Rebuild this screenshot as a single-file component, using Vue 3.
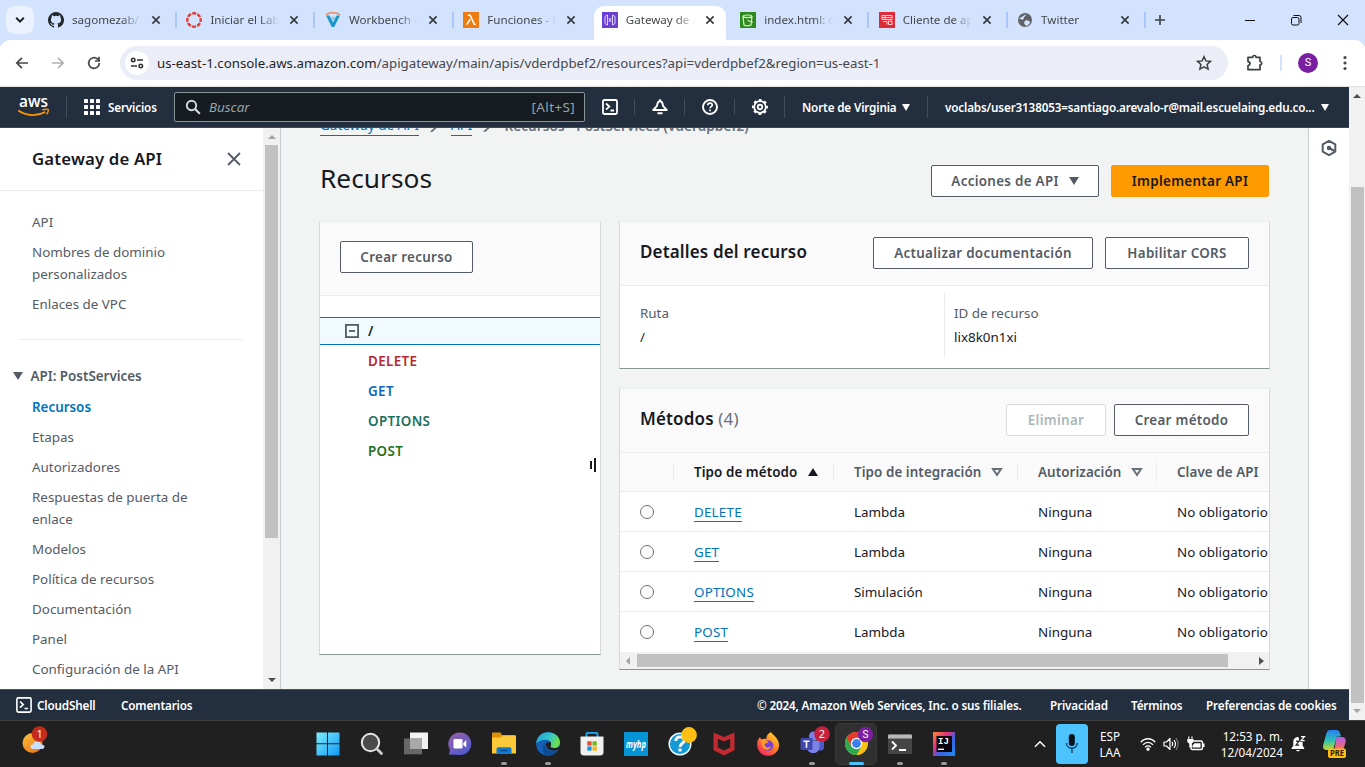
<script setup>
const tabs = [
  { title: 'sagomezab/Taller', icon: 'github', sep: true },
  { title: 'Iniciar el Laboratorio', icon: 'canvas', sep: true },
  { title: 'Workbench - Vocareum', icon: 'voc', sep: true },
  { title: 'Funciones - Lambda', icon: 'lambda' },
  { title: 'Gateway de API', icon: 'gateway', active: true },
  { title: 'index.html: ob', icon: 's3', sep: true },
  { title: 'Cliente de api', icon: 'client', sep: true },
  { title: 'Twitter', icon: 'globe', sep: true },
]
const navTop = ['API', 'Nombres de dominio personalizados', 'Enlaces de VPC']
const navApi = [
  'Recursos', 'Etapas', 'Autorizadores', 'Respuestas de puerta de enlace', 'Modelos',
  'Política de recursos', 'Documentación', 'Panel', 'Configuración de la API',
]
const tree = ['DELETE', 'GET', 'OPTIONS', 'POST']
const methods = [
  { name: 'DELETE', type: 'Lambda' },
  { name: 'GET', type: 'Lambda' },
  { name: 'OPTIONS', type: 'Simulación' },
  { name: 'POST', type: 'Lambda' },
]
</script>

<template>
  <div class="screen">
    <div class="tabstrip">
      <div class="tab-search">
        <svg width="10" height="8" viewBox="0 0 10 8"><path d="M1.2 1.8 5 5.6 8.8 1.8" fill="none" stroke="#1f1f1f" stroke-width="2" /></svg>
      </div>
      <div v-for="t in tabs" :key="t.title" class="tab" :class="{ active: t.active, sep: t.sep }">
        <svg class="fav" width="16" height="16" viewBox="0 0 16 16">
          <path v-if="t.icon === 'github'" fill="#24292f" d="M8 0a8 8 0 0 0-2.53 15.59c.4.07.55-.17.55-.38v-1.49c-2.23.48-2.7-.94-2.7-.94-.36-.92-.89-1.17-.89-1.17-.73-.5.05-.49.05-.49.81.06 1.23.83 1.23.83.72 1.22 1.88.87 2.34.66.07-.52.28-.87.51-1.07-1.78-.2-3.64-.89-3.64-3.95 0-.87.31-1.59.82-2.15-.08-.2-.36-1.02.08-2.12 0 0 .67-.21 2.2.82a7.6 7.6 0 0 1 4 0c1.53-1.04 2.2-.82 2.2-.82.44 1.1.16 1.92.08 2.12.51.56.82 1.27.82 2.15 0 3.07-1.87 3.75-3.65 3.95.29.25.54.73.54 1.48v2.19c0 .21.15.46.55.38A8 8 0 0 0 8 0Z" />
          <g v-else-if="t.icon === 'canvas'" fill="none" stroke="#e23b2e">
            <circle cx="8" cy="8" r="6.7" stroke-width="2.4" stroke-dasharray="4 1.262" stroke-dashoffset="2" />
          </g>
          <g v-else-if="t.icon === 'voc'">
            <path d="M1 3.6h3.4L8 10.4l3.6-6.8H15L9.2 15H6.8Z" fill="#1b98c9" />
            <path d="M5.5 4.8h5L8 9.4Z" fill="#8fd0e8" />
            <path d="M.8 2.6C5 .4 11 .4 15.2 2.6" fill="none" stroke="#e8916b" stroke-width="1.5" />
          </g>
          <g v-else-if="t.icon === 'lambda'">
            <rect width="16" height="16" fill="#ee7c10" />
            <path d="M4.8 3.3h2.4l4 9h1.5M7.2 7.2l-3.4 5.4" fill="none" stroke="#fff" stroke-width="1.6" />
          </g>
          <g v-else-if="t.icon === 'gateway'">
            <rect width="16" height="16" fill="#6b3fd1" />
            <path d="M3 4.5 5.5 3v10L3 11.5ZM13 4.5 10.5 3v10l2.5-1.5ZM6.8 6l2.4 4M9.200 6l-2.400 4" fill="none" stroke="#ddd0fb" stroke-width="1" />
          </g>
          <g v-else-if="t.icon === 's3'">
            <rect width="16" height="16" fill="#2f8a1c" />
            <path d="M3 4.5c0-2 9-2 9 0L11 13c-1 1-6 1-7 0ZM3 4.5c1.5 1.5 7.5 1.5 9 0M7.5 8.5l5.500 1.800" fill="none" stroke="#d9f0cf" stroke-width="1.2" />
          </g>
          <g v-else-if="t.icon === 'client'">
            <rect width="16" height="16" fill="#dd2b38" />
            <path d="M3 3.500h10v4H3zM3 5.500h10M6 3.500v4M4 9.500h4v3M9.500 9h3.500v3.500H9.500z" fill="none" stroke="#fbd0d3" stroke-width="1" />
          </g>
          <g v-else>
            <circle cx="8" cy="8" r="7" fill="#5f6368" />
            <path d="M2 6.500c2 .5 3 1.500 4 1 1.500-.8 0-2 1.800-3C9 4 8.500 2.500 9.500 2M8.500 8.500c2-.8 3.500.4 4.800 1.500-1 2.500-3 3.800-4.300 4-.3-1.500-2-1.500-1.800-3 .1-1 .5-2.100 1.300-2.500Z" fill="#d3e3fd" />
          </g>
        </svg>
        <span class="tab-title">{{ t.title }}</span>
        <svg class="tab-x" width="10" height="10" viewBox="0 0 10 10"><path d="m1.400 1.400 7.200 7.200M8.600 1.400 1.400 8.600" stroke="#33373c" stroke-width="1.600" /></svg>
      </div>
      <svg class="plus" width="12" height="12" viewBox="0 0 12 12"><path d="M6 1v10M1 6h10" stroke="#3c4043" stroke-width="1.600" /></svg>
      <div class="win">
        <svg width="12" height="12" viewBox="0 0 12 12"><path d="M1 6.500h10" stroke="#111" /></svg>
        <svg width="12" height="12" viewBox="0 0 12 12" fill="none" stroke="#111"><rect x="1.500" y="3.500" width="7.500" height="7.500" rx="1.500" /><path d="M3.500 1.500H9a2 2 0 0 1 2 2V9" /></svg>
        <svg width="12" height="12" viewBox="0 0 12 12"><path d="m1 1 10 10M11 1 1 11" stroke="#111" stroke-width="1.200" /></svg>
      </div>
    </div>

    <div class="toolbar">
      <svg class="nav-ic" width="16" height="16" viewBox="0 0 16 16"><path d="M14 8H3M8 2.800 2.800 8 8 13.200" fill="none" stroke="#474747" stroke-width="1.700" /></svg>
      <svg class="nav-ic" width="16" height="16" viewBox="0 0 16 16"><path d="M2 8h11M8 2.800 13.200 8 8 13.200" fill="none" stroke="#b0b1b3" stroke-width="1.700" /></svg>
      <svg class="nav-ic" width="16" height="16" viewBox="0 0 16 16"><path d="M13.300 8A5.300 5.300 0 1 1 11.700 4.200L13.500 6" fill="none" stroke="#474747" stroke-width="1.700" /><path d="M13.900 1.800v5h-5V5.300h3.300V1.800Z" fill="#474747" /></svg>
      <div class="omnibox">
        <div class="site">
          <svg width="14" height="12" viewBox="0 0 14 12" fill="none" stroke="#333" stroke-width="1.600"><circle cx="3.200" cy="3" r="1.700" /><path d="M7 3h6M1 9h6" /><circle cx="10.800" cy="9" r="1.700" /></svg>
        </div>
        <span class="url"><b>us-east-1.console.aws.amazon.com</b>/apigateway/main/apis/vderdpbef2/resources?api=vderdpbef2&amp;region=us-east-1</span>
        <svg width="16" height="16" viewBox="0 0 16 16"><path d="m8 1.700 1.900 4.200 4.600.5-3.400 3.100 1 4.600L8 11.800l-4.100 2.300 1-4.600L1.500 6.400l4.600-.5Z" fill="none" stroke="#3c4043" stroke-width="1.500" /></svg>
      </div>
      <svg class="puzzle" width="18" height="18" viewBox="0 0 18 18"><path d="M2 3.300h4.700c0-2.400 3.300-2.400 3.300 0h4v4.200c2.300.2 2.300 3.200 0 3.400v4.800H2v-4.200c2.600-.2 2.600-3.600 0-3.800Z" fill="none" stroke="#3c4043" stroke-width="1.700" stroke-linejoin="round" /></svg>
      <i class="tsep"></i>
      <span class="avatar">S</span>
      <svg width="4" height="16" viewBox="0 0 4 16" fill="#474747"><circle cx="2" cy="2.500" r="1.600" /><circle cx="2" cy="8" r="1.600" /><circle cx="2" cy="13.500" r="1.600" /></svg>
    </div>

    <div class="page">
      <div class="site-col">
        <header class="aws-head">
          <svg class="logo" width="32" height="22" viewBox="0 0 32 22">
            <text x="16.500" y="11" text-anchor="middle" textLength="29" lengthAdjust="spacingAndGlyphs" class="aws-word">aws</text>
            <path d="M1.300 14.500c8.500 5.800 19 5.800 27 1.500" fill="none" stroke="#f90" stroke-width="1.800" />
            <path d="M25.500 14c2-.9 5-1.100 5.600-.5.500.7-.1 3.300-1.700 4.800" fill="none" stroke="#f90" stroke-width="1.400" />
          </svg>
          <i class="hsep s1"></i>
          <svg class="grid" width="16" height="16" viewBox="0 0 16 16" fill="#fff"><g v-for="r in 3" :key="r"><rect v-for="c in 3" :key="c" :x="(c - 1) * 6" :y="(r - 1) * 6" width="4" height="4" rx=".6" /></g></svg>
          <b class="serv">Servicios</b>
          <div class="search">
            <svg width="16" height="16" viewBox="0 0 16 16"><circle cx="6.500" cy="6.500" r="4.700" fill="none" stroke="#d5dbdb" stroke-width="1.900" /><path d="m10 10 4.800 4.800" stroke="#d5dbdb" stroke-width="2.200" /></svg>
            <em>Buscar</em><span>[Alt+S]</span>
          </div>
          <div class="hicons">
            <svg width="16" height="16" viewBox="0 0 16 16" fill="none" stroke="#fff" stroke-width="1.800"><rect x="1" y="1" width="14" height="14" rx="1.500" /><path d="M4 4.500 7.300 7.600 4 10.700M8.500 11.500H12" /></svg>
            <svg width="16" height="16" viewBox="0 0 16 16" fill="none" stroke="#fff" stroke-width="1.900" stroke-linejoin="round"><path d="M8 .3v2M8 2.300C6 2.300 5.300 4.500 5 6.800L1.300 11h13.400L11 6.800C10.700 4.500 10 2.300 8 2.300ZM5.500 14.200h5" /></svg>
            <svg width="16" height="16" viewBox="0 0 16 16" fill="none" stroke="#fff" stroke-width="1.900"><circle cx="8" cy="8" r="7" /><path d="M5.700 6.300C5.900 3.200 10.400 3.500 10.300 6c-.1 1.600-2.300 1.600-2.300 3.300M8 10.500v1.800" stroke-width="1.700" /></svg>
            <svg width="16" height="16" viewBox="0 0 16 16" fill="none" stroke="#fff"><circle cx="8" cy="8" r="5.800" stroke-width="1.800" /><circle cx="8" cy="8" r="7.100" stroke-width="1.800" stroke-dasharray="2.800 2.777" stroke-dashoffset="1.400" /><circle cx="8" cy="8" r="2.200" stroke-width="1.900" /></svg>
          </div>
          <b class="region">Norte de Virginia</b><i class="tri wt"></i>
          <i class="hsep s2"></i>
          <b class="user">voclabs/user3138053=santiago.arevalo-r@mail.escuelaing.edu.co...</b><i class="tri wt"></i>
        </header>

        <div class="body">
          <aside class="side">
            <div class="side-main">
              <div class="side-title">
                <b>Gateway de API</b>
                <svg width="14" height="14" viewBox="0 0 14 14"><path d="m1 1 12 12M13 1 1 13" stroke="#545b64" stroke-width="1.800" /></svg>
              </div>
              <ul class="nav first"><li v-for="n in navTop" :key="n">{{ n }}</li></ul>
              <div class="rule"></div>
              <div class="group"><i class="tri"></i>API: PostServices</div>
              <ul class="nav"><li v-for="(n, i) in navApi" :key="n" :class="{ on: i === 0 }">{{ n }}</li></ul>
            </div>
            <div class="vbar side-bar">
              <i class="up dim"></i><div class="thumb"></div><i class="down"></i>
            </div>
          </aside>

          <main class="main">
            <div class="crumbs">
              <a>Gateway de API</a>
              <svg width="10" height="12" viewBox="0 0 10 12"><path d="m2 0 5.500 6L1 12" fill="none" stroke="#687078" stroke-width="1.800" /></svg>
              <a>API</a>
              <svg width="10" height="12" viewBox="0 0 10 12"><path d="m2 0 5.500 6L1 12" fill="none" stroke="#687078" stroke-width="1.800" /></svg>
              <b>Recursos - PostServices (vderdpbef2)</b>
            </div>
            <div class="head">
              <h1>Recursos</h1>
              <button class="btn actions">Acciones de API<i class="tri"></i></button>
              <button class="btn primary">Implementar API</button>
            </div>
            <div class="cols">
              <section class="card tree">
                <div class="tree-head"><button class="btn create">Crear recurso</button></div>
                <div class="root">
                  <svg width="14" height="14" viewBox="0 0 14 14" fill="none" stroke="#545b64" stroke-width="1.800"><rect x=".9" y=".9" width="12.200" height="12.200" /><path d="M4 7h6" /></svg>
                  <b>/</b>
                </div>
                <div v-for="m in tree" :key="m" class="leaf" :class="m.toLowerCase()">{{ m }}</div>
                <div class="grip"><i></i><i></i></div>
              </section>
              <div class="right">
                <section class="card details">
                  <div class="card-head">
                    <h2>Detalles del recurso</h2>
                    <button class="btn update">Actualizar documentación</button>
                    <button class="btn cors">Habilitar CORS</button>
                  </div>
                  <dl>
                    <div class="pair"><dt>Ruta</dt><dd>/</dd></div>
                    <div class="pair"><dt>ID de recurso</dt><dd>lix8k0n1xi</dd></div>
                  </dl>
                </section>
                <section class="card methods">
                  <div class="card-head">
                    <h2>Métodos <span>(4)</span></h2>
                    <button class="btn del">Eliminar</button>
                    <button class="btn new">Crear método</button>
                  </div>
                  <div class="row thead">
                    <span></span>
                    <span class="sorted">Tipo de método<svg width="12" height="10" viewBox="0 0 12 10"><path d="M6 1 11 9H1Z" fill="#16191f" /></svg></span>
                    <span>Tipo de integración<svg width="12" height="10" viewBox="0 0 12 10"><path d="M2 2h8L6 8Z" fill="none" stroke="#687078" stroke-width="2" /></svg></span>
                    <span>Autorización<svg width="12" height="10" viewBox="0 0 12 10"><path d="M2 2h8L6 8Z" fill="none" stroke="#687078" stroke-width="2" /></svg></span>
                    <span>Clave de API</span>
                  </div>
                  <div v-for="m in methods" :key="m.name" class="row">
                    <span class="rc"><i class="radio"></i></span>
                    <span><a>{{ m.name }}</a></span>
                    <span>{{ m.type }}</span>
                    <span>Ninguna</span>
                    <span>No obligatorio</span>
                  </div>
                  <div class="hbar"><i class="left"></i><div class="hthumb"></div><i class="rightarr"></i></div>
                </section>
              </div>
            </div>
          </main>

          <div class="rail">
            <svg width="16" height="18" viewBox="0 0 16 18" fill="none" stroke="#545b64" stroke-width="2"><path d="M8 1.800 14.300 5.300v7.400L8 16.200 1.700 12.700V5.300Z" stroke-linejoin="round" /><path d="m8 9 5.500 3" stroke-width="2.200" /><circle cx="8" cy="9" r="1.300" fill="#545b64" /></svg>
          </div>
        </div>

        <footer class="foot">
          <svg width="16" height="16" viewBox="0 0 16 16" fill="none" stroke="#fff" stroke-width="1.600"><rect x=".9" y=".9" width="14.200" height="14.200" rx="1.500" /><path d="M4 4.500 7.300 7.600 4 10.700M8.500 11.500H12" /></svg>
          <b class="f1">CloudShell</b><b class="f2">Comentarios</b>
          <b class="f3">© 2024, Amazon Web Services, Inc. o sus filiales.</b>
          <b class="f4">Privacidad</b><b class="f5">Términos</b><b class="f6">Preferencias de cookies</b>
        </footer>
      </div>
      <div class="vbar page-bar"><i class="up"></i><div class="thumb"></div><i class="down dim"></i></div>
    </div>

    <div class="taskbar">
      <div class="weather">
        <svg width="28" height="30" viewBox="0 0 28 30">
          <defs><linearGradient id="sun" x1="0" y1="0" x2=".6" y2="1"><stop offset="0" stop-color="#f8c43c" /><stop offset="1" stop-color="#f0781c" /></linearGradient></defs>
          <circle cx="10.500" cy="17" r="10" fill="url(#sun)" />
          <path d="M11 23c-3.500 0-3.500-5 0-4.500 1-4.500 7.500-4 8 0 4.500-.5 4.500 4.500 1 4.500Z" fill="#c9defa" />
          <circle cx="17.500" cy="8" r="7.800" fill="#c42b1c" />
          <text x="17.600" y="12.300" text-anchor="middle" class="badge">1</text>
        </svg>
      </div>
      <div class="apps">
        <div class="app">
          <svg width="24" height="24" viewBox="0 0 24 24"><defs><linearGradient id="win" x1="0" y1="0" x2="1" y2="1"><stop offset="0" stop-color="#7ef0fb" /><stop offset="1" stop-color="#0f96f5" /></linearGradient></defs><path d="M.5.500H11v10.700H.5ZM12 .500h11.500v10.700H12ZM.5 12.300H11v11.200H.5ZM12 12.300h11.500v11.200H12Z" fill="url(#win)" /></svg>
        </div>
        <div class="app">
          <svg width="24" height="24" viewBox="0 0 24 24"><circle cx="10.500" cy="10.500" r="8.700" fill="#4a4a4a" stroke="#e6e6e6" stroke-width="2" /><path d="m17 17 4.500 4.500" stroke="#d0d0d0" stroke-width="2.800" stroke-linecap="round" /></svg>
        </div>
        <div class="app">
          <svg width="24" height="24" viewBox="0 0 24 24"><path d="M6 .5h18V17H6Z" fill="#f2f2f2" /><path d="M0 6.500h18v15.800H0Z" fill="#6c6c6c" opacity=".95" /><path d="M6 6.500h12V17H6Z" fill="#a9a9a9" /></svg>
        </div>
        <div class="app">
          <svg width="24" height="24" viewBox="0 0 24 24"><defs><linearGradient id="chat" x1="0" y1="0" x2=".7" y2="1"><stop offset="0" stop-color="#9a5fa8" /><stop offset="1" stop-color="#5159cf" /></linearGradient></defs><path d="M12 .5a11.300 11.300 0 1 1 0 22.600L.8 22.500 2 18A11.500 11.500 0 0 1 12 .500Z" fill="url(#chat)" /><rect x="5.500" y="7" width="9" height="9.500" rx="1.200" fill="#fff" /><path d="m15.300 11 3-3v7.600l-3-2.600Z" fill="#fff" /></svg>
        </div>
        <div class="app run">
          <svg width="24" height="24" viewBox="0 0 24 24"><path d="M0 1.500Q0 .5 1 .500h7.500L10 3h13v6H0Z" fill="#dd9206" /><path d="M0 5.500h8.500l2-2H24V21.500H0Z" fill="#fcc93a" /><path d="M4.500 21.500V17q0-1.800 1.800-1.800h11.400q1.800 0 1.800 1.800v4.500Z" fill="#0f78cf" /><path d="M8 18.500h8" stroke="#0a4d8c" stroke-width="1.200" /></svg>
        </div>
        <div class="app run">
          <svg width="24" height="24" viewBox="0 0 24 24"><defs><linearGradient id="edge" x1="0" y1="0" x2="1" y2=".4"><stop offset="0" stop-color="#1b9de0" /><stop offset=".6" stop-color="#35c6c9" /><stop offset="1" stop-color="#6be04e" /></linearGradient></defs><circle cx="12" cy="12" r="11.800" fill="#1361b4" /><path d="M.2 11.500C.5 5 5.600.2 12 .2 19 .2 24 5 24 10.200c0 3.800-2.800 5.800-5.700 5.800-2.500 0-4.300-.9-3.700-2 1.800-3-.6-6.300-4.300-6.300-5 0-8.500 2-10.100 3.800Z" fill="url(#edge)" /><path d="M9.500 9.800c-2.500 5 2 10.700 8 9.500 2.300-.4 3.700-1.300 4.800-1.700-1 2-5 6.300-11 6C5.500 22 6 13 9.500 9.800Z" fill="#0c4a94" /><path d="M10 11c-1 4 2.500 8 8 7.500 2-.2 3.600-.8 4.500-1.200l1.500 2V15l-3 .800c-4 .8-7.500-.3-6.300-2 .8-1.500.3-3-.7-4Z" fill="#202020" /></svg>
        </div>
        <div class="app">
          <svg width="24" height="24" viewBox="0 0 24 24"><path d="M6.500 6V2.300q0-1.500 1.500-1.500h8q1.500 0 1.500 1.500V6" fill="none" stroke="#21a6ee" stroke-width="1.900" /><path d="M.5 4.500h23V20q0 3.500-3.500 3.500H4Q.5 23.500.5 20Z" fill="#f0f0f0" /><path d="M7.300 9.300h4.300v4.300H7.300Z" fill="#e8482c" /><path d="M12.500 9.300h4.300v4.300h-4.300Z" fill="#74b82a" /><path d="M7.300 14.500h4.300v4.200H7.300Z" fill="#1597e5" /><path d="M12.500 14.500h4.300v4.200h-4.300Z" fill="#f9b716" /></svg>
        </div>
        <div class="app">
          <svg width="24" height="24" viewBox="0 0 24 24"><rect width="24" height="24" rx="1" fill="#0594d6" /><text x="12" y="15.500" text-anchor="middle" textLength="20" lengthAdjust="spacingAndGlyphs" class="hp">myhp</text></svg>
        </div>
        <div class="app">
          <svg class="wide" width="30" height="30" viewBox="0 0 30 30"><circle cx="12" cy="18" r="10.800" fill="#139ad6" stroke="#e9f3f8" stroke-width="1.500" /><path d="M7.800 15c0-5.500 8.500-5.300 8.400-.5-.1 3-4.200 3-4.200 6.500" fill="none" stroke="#fff" stroke-width="2.900" /><circle cx="12" cy="24" r="1.800" fill="#fff" /><circle cx="21" cy="9" r="7.900" fill="#fdbf13" /></svg>
        </div>
        <div class="app">
          <svg width="24" height="24" viewBox="0 0 24 24"><path d="m1.500.5 10.500 4.500L22.500.5v17.800L12 23.500 1.500 18.300Zm4.300 6.300v8.800l6.200 3 6.200-3V6.800L12 9.500Z" fill="#c02a30" fill-rule="evenodd" /></svg>
        </div>
        <div class="app">
          <svg width="24" height="24" viewBox="0 0 24 24"><defs><linearGradient id="ff" x1="1" y1="0" x2=".3" y2="1"><stop offset="0" stop-color="#ffe03a" /><stop offset=".5" stop-color="#ff8a24" /><stop offset="1" stop-color="#f4295c" /></linearGradient></defs><path d="M15 .3c1.500 2.500 8 6 8 12.500A10.900 10.900 0 0 1 1.200 13C1 9.500 2.300 6.800 4 5l1 2.300c2-.8 5-.5 5.500-.3C9.800 4.500 12.500 1 15 .300Z" fill="url(#ff)" /><circle cx="12" cy="13.500" r="5.300" fill="#7a40d6" /><path d="M4.500 8.500c3-1.500 5 0 6.300.3 2.200.5 1 2.200-.8 2.500-1.500.2-2 2-.5 3.200 2 1.800 4.500 1 5.500-.5 0 4-6 5-8 1.800-1.600-2.300-.8-5-2.500-7.300Z" fill="#ff9a2b" /></svg>
        </div>
        <div class="app run">
          <svg class="wide" width="30" height="30" viewBox="0 0 30 30"><circle cx="13.500" cy="10" r="4.500" fill="#7b83eb" /><circle cx="21.500" cy="12.500" r="3" fill="#5059c9" /><path d="M17.500 14.500h6.500v6.500c0 5-6.500 5-6.500 0Z" fill="#5059c9" /><path d="M7 14.500h12.500V21c0 8-12.500 8-12.500 0Z" fill="#7b83eb" /><rect x=".5" y="12" width="12" height="12" rx="1" fill="#4048b0" /><path d="M3.500 15.300h6M6.500 15.300v6.500" stroke="#fff" stroke-width="1.600" /><circle cx="22" cy="8" r="7.800" fill="#c9213b" /><text x="22" y="12.200" text-anchor="middle" class="badge">2</text></svg>
        </div>
        <div class="app run current">
          <svg class="wide" width="30" height="30" viewBox="0 0 30 30"><circle cx="12.500" cy="17.500" r="11.500" fill="#fbc116" /><path d="M2.500 11.800A11.500 11.500 0 0 1 22.500 11.800H12.500L7.500 20.400Z" fill="#e33b2e" /><path d="M2.500 11.800A11.500 11.500 0 0 0 12.500 29l5-8.600H7.500Z" fill="#2da94f" /><circle cx="12.500" cy="17.500" r="5.700" fill="#fff" /><circle cx="12.500" cy="17.500" r="4.400" fill="#3a80f0" /><circle cx="21.500" cy="8.500" r="7.700" fill="#7b1fa2" /><text x="21.500" y="12" text-anchor="middle" class="badge sm">S</text></svg>
        </div>
        <div class="app run">
          <svg width="24" height="24" viewBox="0 0 24 24"><rect x="0" y="2.500" width="24" height="19.500" rx="1" fill="#464646" /><path d="M0 6.500v-3q0-1 1-1h22q1 0 1 1v3Z" fill="#b9b9b9" /><path d="m4 9.500 4 4-4 4M11 18h7" fill="none" stroke="#fff" stroke-width="1.800" /></svg>
        </div>
        <div class="app run">
          <svg width="24" height="24" viewBox="0 0 24 24"><defs><linearGradient id="ij" x1="0" y1="0" x2="1" y2="1"><stop offset="0" stop-color="#fb8a2e" /><stop offset=".35" stop-color="#e8327c" /><stop offset=".6" stop-color="#3a62e8" /><stop offset="1" stop-color="#1b8ff0" /></linearGradient></defs><rect x="1" width="22" height="24" fill="url(#ij)" /><rect x="4.500" y="4" width="15.500" height="16" fill="#0b0410" /><text x="6" y="12" class="ij">IJ</text><path d="M6 17.300h6" stroke="#fff" stroke-width="1.400" /></svg>
        </div>
      </div>
      <svg class="chev" width="12" height="8" viewBox="0 0 12 8"><path d="M1 6.800 6 1.800l5 5" fill="none" stroke="#fff" stroke-width="1.500" /></svg>
      <div class="mic"><svg width="14" height="20" viewBox="0 0 14 20"><rect x="3.800" y="0" width="6" height="12" rx="3" fill="#06121c" /><path d="M1.500 9c0 7 10.800 7 10.800 0M7 14.500V19" fill="none" stroke="#0a3a5a" stroke-width="1.300" /></svg></div>
      <div class="lang"><span>ESP</span><span>LAA</span></div>
      <svg class="wifi" width="16" height="14" viewBox="0 0 16 14" fill="none" stroke="#fff" stroke-width="1.300"><path d="M.8 5.200c4-4.600 10.400-4.600 14.400 0M3 7.800c3-3.200 7-3.200 10 0M5.200 10.200c1.700-1.700 3.900-1.700 5.600 0" /><circle cx="8" cy="12.200" r="1" fill="#fff" /></svg>
      <svg class="vol" width="16" height="14" viewBox="0 0 16 14" fill="none" stroke="#fff" stroke-width="1.200"><path d="M1 5h2.500L7 1.500v11L3.500 9H1Z" stroke-linejoin="round" /><path d="M9 4.800q1.600 2.200 0 4.400M11 3q3 4 0 8" /><path d="M13 1.200q4.200 5.800 0 11.600" stroke="#777" /></svg>
      <svg class="bat" width="18" height="16" viewBox="0 0 18 16"><rect x="4" y="5" width="11.500" height="8.500" rx="1.500" fill="none" stroke="#fff" stroke-width="1.400" /><path d="M7.500 7.200h6v4.200H5.500V9.500ZM16 7.500h1.500v3.500H16ZM1.200.5h1.200v2.300H1.200ZM4.400.5h1.200v2.300H4.400ZM.3 3h6.200v3L4.500 7.800v3.700H2.300V7.800L.3 6Z" fill="#fff" /></svg>
      <div class="clock"><span>12:53 p. m.</span><span>12/04/2024</span></div>
      <svg class="dnd" width="15" height="16" viewBox="0 0 15 16"><path d="M7.500 1C4 1 2.300 3.300 2.300 6v3.700L.6 12v1h12.600v-1l-1.600-2.300V6H8.500Z" fill="#fff" /><path d="M5 5.200h3L5 9.200h3.200" fill="none" stroke="#202020" stroke-width="1.200" /><path d="M10 .7h3.500l-3.500 4h3.700" fill="none" stroke="#fff" stroke-width="1.200" /><path d="M5 14c.8 1.800 3.200 1.800 4 0Z" fill="#fff" /></svg>
      <svg class="copilot" width="26" height="30" viewBox="0 0 26 30">
        <defs><linearGradient id="c1" x1="0" y1="0" x2="0" y2="1"><stop offset="0" stop-color="#2a7df2" /><stop offset=".5" stop-color="#29c0b8" /><stop offset="1" stop-color="#c8d82c" /></linearGradient><linearGradient id="c2" x1="0" y1="0" x2="0" y2="1"><stop offset="0" stop-color="#b45cf0" /><stop offset="1" stop-color="#fb6e5a" /></linearGradient></defs>
        <path d="M8 1h7q2 0 3 3l1 3.500h-4L11 21H5Q0 21 1.200 16L4.500 4Q5.500 1 8 1Z" fill="url(#c1)" />
        <path d="M14.500 8h5.500q4.500 0 3.500 5.500l-2 6.500h-9Z" fill="url(#c2)" />
        <rect x="6" y="19.500" width="18" height="9.500" rx="2" fill="#fdbf13" />
        <text x="15" y="27.200" text-anchor="middle" textLength="14" lengthAdjust="spacingAndGlyphs" class="pre">PRE</text>
      </svg>
    </div>
  </div>
</template>

<style>
html, body { margin: 0; overflow: hidden; }
</style>

<style scoped>
* { box-sizing: border-box; }
.screen { width: 1365px; height: 767px; display: flex; flex-direction: column; overflow: hidden; font: 13.4px/22px "Noto Sans", "Open Sans", sans-serif; color: #16191f; background: #fff; }
svg { flex: none; display: block; }
i { flex: none; }
b { font-weight: 600; }

.tabstrip { height: 46px; margin-bottom: -6px; background: #d3e3fd; display: flex; align-items: center; padding: 0 0 6px 6px; flex: none; font-size: 11.6px; }
.tab-search { width: 28px; height: 28px; border-radius: 9px; background: #ebf2fe; display: flex; align-items: center; justify-content: center; margin-right: 6px; }
.tab { position: relative; width: 138.45px; height: 34px; margin-top: 6px; padding: 0 0 6px 8px; display: flex; align-items: center; flex: none; }
.tab-title { width: 69px; margin-left: 8px; height: 20px; line-height: 20px; overflow: hidden; white-space: nowrap; color: #43474c; -webkit-mask-image: linear-gradient(90deg, #000 72%, transparent); mask-image: linear-gradient(90deg, #000 72%, transparent); }
.tab-x { margin-left: 10px; }
.tab.sep::after { content: ""; position: absolute; left: 135px; top: 6px; width: 2px; height: 16px; background: #a8c7fa; }
.tab.active::before { content: ""; position: absolute; z-index: 0; left: 0; top: 0; width: 132px; height: 34px; background: #fff; border-radius: 10px 10px 0 0; }
.tab.active > * { position: relative; z-index: 1; }
.plus { margin-left: 6px; }
.win { display: flex; gap: 34.500px; margin-left: 78px; }

.toolbar { position: relative; z-index: 2; height: 47px; flex: none; background: #fff; border-radius: 10px 10px 0 0; border-bottom: 1px solid #dfe1e5; display: flex; align-items: center; padding-left: 14px; }
.nav-ic { margin-right: 20px; }
.omnibox { width: 1108px; height: 34px; margin-left: -2px; border-radius: 17px; background: #ebeef7; display: flex; align-items: center; padding: 0 16px 0 5px; flex: none; }
.site { width: 24px; height: 24px; border-radius: 50%; background: #fff; display: flex; align-items: center; justify-content: center; }
.url { flex: 1; margin-left: 8px; font-size: 13.270px; color: #45484d; white-space: nowrap; }
.url b { font-weight: 400; color: #1f1f1f; }
.puzzle { margin-left: 18px; }
.tsep { width: 2px; height: 16px; background: #d3e3fd; margin-left: 16px; }
.avatar { width: 20px; height: 20px; border-radius: 50%; background: #7b1fa2; color: #fff; font: 11px/20px Roboto, sans-serif; text-align: center; margin: 0 25px 0 16px; }

.page { height: 633px; flex: none; display: flex; }
.site-col { width: 1349px; display: flex; flex-direction: column; }
.aws-head { height: 41px; flex: none; background: #232f3e; border-bottom: 1px solid #3d4855; display: flex; align-items: center; padding-left: 17px; color: #fff; font-size: 11.700px; position: relative; z-index: 3; }
.aws-head b, .foot b { white-space: nowrap; flex: none; letter-spacing: -.16px; }
.aws-word { font: 600 16px "Open Sans", sans-serif; fill: #fff; }
.hsep { width: 1px; height: 22px; background: #414d5c; }
.s1 { margin: 0 17px; }
.serv { width: 66px; margin-left: 8px; }
.search { width: 411px; height: 30px; flex: none; border: 1px solid #879596; border-radius: 2px; background: #161a21; display: flex; align-items: center; padding: 0 9px 0 10px; font-size: 13.400px; color: #95a5a6; }
.search em { margin-left: 8px; flex: 1; }
.search span { letter-spacing: .4px; }
.hicons { display: flex; height: 22px; align-items: center; width: 200px; }
.hicons svg { margin: 0 16px 0 17px; box-sizing: content-box; }
.hicons svg + svg { margin-left: 0; padding-left: 17px; border-left: 1px solid #414d5c; }
.region { width: 100px; margin-left: 17px; position: relative; }
.region::before { content: ""; position: absolute; left: -18px; top: 0; height: 22px; width: 1px; background: #414d5c; }
.tri { display: inline-block; width: 0; height: 0; border: 5.500px solid transparent; border-top: 8px solid #545b64; border-bottom: 0; }
.tri.wt { border-width: 4.500px; border-top: 7px solid #fff; border-bottom: 0; }
.s2 { margin: 0 17px; }
.user { width: 376px; }

.body { flex: 1; min-height: 0; display: flex; overflow: hidden; background: #f2f3f3; }
.side { width: 281px; flex: none; display: flex; background: #fff; border-right: 1px solid #c8ccd0; overflow: hidden; }
.side-main { width: 263px; flex: none; color: #545b64; }
.side-title { height: 63px; border-bottom: 1px solid #eaeded; display: flex; align-items: center; justify-content: space-between; padding: 0 22px 0 32px; color: #16191f; font-size: 16.800px; letter-spacing: .15px; }
.nav { list-style: none; margin: 0; padding: 0 50px 0 32px; }
.nav li { margin-bottom: 8px; line-height: 22px; }
.nav.first { padding-top: 20px; }
.nav .on { color: #0073bb; font-weight: 600; }
.rule { height: 1px; background: #eaeded; margin: 24px 20px 0; }
.group { display: flex; align-items: center; gap: 8px; padding-left: 12.500px; margin: 25px 0 9px; font-weight: 600; }
.vbar { width: 17px; background: #f1f1f1; display: flex; flex-direction: column; align-items: center; flex: none; }
.vbar .thumb { width: 13px; background: #c1c1c1; }
.up { width: 0; height: 0; border: 4px solid transparent; border-top: 0; border-bottom: 4px solid #505050; }
.down { width: 0; height: 0; border: 4px solid transparent; border-bottom: 0; border-top: 4px solid #505050; }
.up.dim { border-bottom-color: #a3a3a3; }
.down.dim { border-top-color: #a3a3a3; }
.side-bar .up { margin: 7px 0 6px; }
.side-bar .thumb { height: 393px; }
.side-bar .down { margin-top: auto; margin-bottom: 7px; }
.page-bar { width: 16px; }
.page-bar .up { margin: 7px 0 5px; }
.page-bar .thumb { height: 516px; margin-top: 84px; }
.page-bar .down { margin-top: 6px; }

.main { width: 1027px; flex: none; padding-left: 39px; }
.crumbs { display: flex; align-items: center; height: 20px; margin-top: -12px; white-space: nowrap; gap: 11px; font-size: 13.500px; color: #687078; }
.crumbs a { color: #0073bb; border-bottom: 1px solid #0073bb; line-height: 19px; }
.crumbs b { letter-spacing: .1px; }
.head { height: 32px; margin-top: 29px; display: flex; width: 949px; }
h1 { margin: -3px auto 0 0; font-size: 26.300px; line-height: 32px; font-weight: 400; }
.btn { height: 32px; flex: none; background: #fff; border: 1px solid #545b64; border-radius: 2px; color: #545b64; font: 600 13.400px/20px "Noto Sans", "Open Sans", sans-serif; padding: 0; letter-spacing: .3px; display: flex; align-items: center; justify-content: center; white-space: nowrap; }
.actions { width: 168px; gap: 10px; }
.primary { width: 158px; margin-left: 12px; background: #f90; border-color: #f90; color: #16191f; }
.cols { margin-top: 24px; display: flex; gap: 19px; }
.card { background: #fff; border: 1px solid #d5dbdb; border-top-color: #eaeded; border-bottom-color: #879596; }
.tree { position: relative; width: 282px; height: 434px; margin-left: -1px; }
.tree-head { height: 74px; background: #fafafa; border-bottom: 1px solid #eaeded; padding: 19px 0 0 20px; }
.create { width: 133px; }
.root { height: 28px; margin-top: 21px; background: #f1faff; border: solid #0073bb; border-width: 1px 0; display: flex; align-items: center; padding-left: 25px; gap: 9px; }
.leaf { height: 22px; margin-bottom: 8px; padding-left: 48px; font-weight: 600; letter-spacing: .35px; }
.root + .leaf { margin-top: 5px; }
.delete { color: #b5282f; }
.get { color: #1166bb; }
.options { color: #1b7060; }
.post { color: #22701a; }
.grip { position: absolute; right: 4px; top: 236px; display: flex; align-items: center; gap: 2px; }
.grip i { width: 2px; height: 8px; background: #16191f; }
.grip i + i { height: 14px; }
.right { width: 651px; margin-left: -1px; }
.card-head { background: #fafafa; border-bottom: 1px solid #eaeded; height: 64px; display: flex; padding: 15px 20px 0; }
h2 { margin: 4px auto 0 0; font-size: 17px; line-height: 22px; font-weight: 600; letter-spacing: .15px; }
h2 span { font-weight: 400; color: #687078; }
.update { width: 220px; }
.cors { width: 144px; margin-left: 12px; }
.details { height: 148px; }
dl { margin: 0; display: flex; padding: 7px 20px 0; }
.pair { width: 304px; height: 65px; padding-top: 9px; }
.pair + .pair { border-left: 1px solid #eaeded; padding-left: 9px; }
dt { color: #545b64; line-height: 22px; }
dd { margin: 2px 0 0; line-height: 22px; }
.methods { margin-top: 19px; height: 282px; overflow: hidden; }
.del { width: 100px; color: #aab7b8; border-color: #d5dbdb; }
.new { width: 135px; margin-left: 8px; }
.row { display: grid; grid-template-columns: 53px 160px 184px 139px 200px; height: 40px; align-items: center; border-bottom: 1px solid #eaeded; white-space: nowrap; }
.row > span + span { padding-left: 21px; }
.row:nth-last-child(2) { border-bottom: 0; }
.row a { color: #0073bb; border-bottom: 1px solid #0073bb; letter-spacing: .2px; }
.row.thead { height: 39px; background: #fafafa; color: #545b64; font-weight: 600; letter-spacing: .08px; }
.thead > span { display: flex; align-items: center; gap: 10px; height: 20px; }
.thead > span + span { border-left: 1px solid #eaeded; padding-left: 20px; }
.thead .sorted { color: #16191f; }
.rc { padding-left: 20px; }
.radio { display: block; width: 14px; height: 14px; border: 1px solid #687078; border-radius: 50%; }
.hbar { height: 17px; background: #f1f1f1; display: flex; align-items: center; padding-left: 6px; }
.hthumb { width: 591px; height: 13px; background: #c1c1c1; margin-left: 7px; }
.left { border: 4px solid transparent; border-left: 0; border-right: 4px solid #a3a3a3; }
.rightarr { border: 4px solid transparent; border-right: 0; border-left: 5px solid #505050; margin-left: 31px; }
.rail { width: 41px; background: #fff; border-left: 1px solid #c8ccd0; padding: 11px 0 0 12px; }

.foot { height: 31px; flex: none; background: #232f3e; border-top: 1px solid #4a5460; display: flex; align-items: center; padding-left: 16px; color: #fff; font-size: 11.700px; }
.f1 { width: 84px; margin-left: 5px; }
.f2 { width: 636px; }
.f3 { width: 293px; }
.f4 { width: 81px; }
.f5 { width: 75px; }

.taskbar { height: 47px; flex: none; background: #202020; border-top: 1px solid #3f3f3f; display: flex; align-items: center; color: #fff; }
.weather { width: 284px; padding: 0 0 2px 22px; height: 36px; }
.apps { display: flex; width: 680px; height: 40px; padding-left: 21.500px; }
.app { position: relative; width: 44px; height: 40px; flex: none; display: flex; align-items: center; justify-content: center; }
.wide { margin: -6px -6px 0 0; }
.app.run::after { content: ""; position: absolute; left: 19px; bottom: -1px; width: 6px; height: 3px; border-radius: 2px; background: #9a9a9a; }
.app.current { background: #303030; border-radius: 4px; width: 40px; margin: 0 2px; box-shadow: 0 0 0 1px #3a3a3a; }
.app.current::after { left: 13px; width: 15px; background: #4cc2ff; }
.badge { font: 11px "Noto Sans", sans-serif; fill: #fff; }
.badge.sm { font: 10px Roboto, sans-serif; }
.hp { font: italic 700 10px "Open Sans", sans-serif; fill: #fff; }
.ij { font: 700 9px "Liberation Mono", monospace; fill: #fff; }
.pre { font: 700 8px "Noto Sans", sans-serif; fill: #2a2000; }
.chev { margin-left: 70px; }
.mic { width: 32px; height: 40px; border-radius: 4px; background: #4cc2ff; display: flex; align-items: center; justify-content: center; margin-left: 10px; flex: none; }
.lang, .clock { display: flex; flex-direction: column; font-size: 11.700px; line-height: 16px; align-items: center; white-space: nowrap; }
.lang { width: 22px; margin-left: 11px; }
.wifi { margin-left: 19px; }
.vol { margin-left: 7px; }
.bat { margin-left: 8px; }
.clock { width: 64px; margin-left: 14px; align-items: flex-end; }
.dnd { margin-left: 8px; }
.copilot { margin-left: 16px; }
</style>
